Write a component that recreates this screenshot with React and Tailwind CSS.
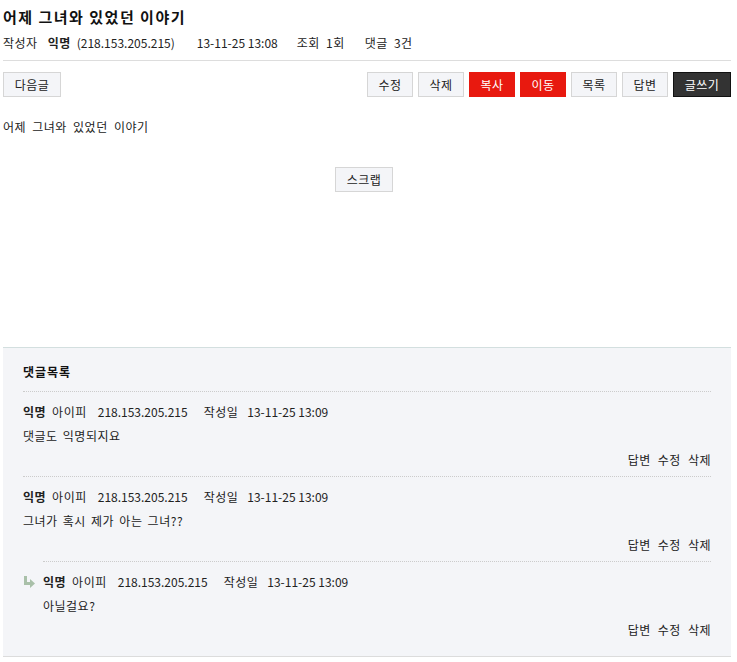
import React from "react";

const font = { fontFamily: '"Noto Sans CJK KR", "Noto Sans", sans-serif' };

const Btn = ({ children, variant = "default", wide = false }) => {
  const styles = {
    default: "bg-[#f4f5f8] border-[#d6d6d6] text-[#222]",
    red: "bg-[#e8190f] border-[#e8190f] text-white",
    dark: "bg-[#333] border-[#111] text-white",
  };
  return (
    <button className={`h-[25px] ${wide ? "w-[58px]" : "w-[46px]"} border text-[12px] leading-none tracking-[0.5px] ${styles[variant]}`}>
      {children}
    </button>
  );
};

const comments = [
  { id: 1, name: "익명", ip: "218.153.205.215", date: "13-11-25 13:09", body: "댓글도 익명되지요", reply: false },
  { id: 2, name: "익명", ip: "218.153.205.215", date: "13-11-25 13:09", body: "그녀가 혹시 제가 아는 그녀??", reply: false },
  { id: 3, name: "익명", ip: "218.153.205.215", date: "13-11-25 13:09", body: "아닐걸요?", reply: true },
];

const ReplyArrow = () => (
  <svg width="12" height="12" viewBox="0 0 12 12" className="shrink-0">
    <path d="M1 0h3v6h3V3l5 4.5L7 12V9H1z" fill="#a9c0a9" />
  </svg>
);

const Comment = ({ c }) => (
  <div className={`pt-[8px] pb-[5px] ${c.reply ? "ml-[20px]" : ""} ${c.id > 1 ? "border-t border-dotted border-[#ccc]" : ""}`}>
    <div className="flex items-center h-[24px] text-[12px] text-[#222]">
      {c.reply && (
        <span className="-ml-[20px] w-[20px] flex items-center">
          <ReplyArrow />
        </span>
      )}
      <b className="font-bold tracking-[0.5px]">{c.name}</b>
      <span className="ml-[6px] tracking-[0.5px]">아이피</span>
      <span className="ml-[11px]">{c.ip}</span>
      <span className="ml-[16px] tracking-[0.5px]">작성일</span>
      <span className="ml-[9px]">{c.date}</span>
    </div>
    <div className="h-[24px] flex items-center text-[12px] text-[#222] tracking-[0.5px] [word-spacing:2px]">{c.body}</div>
    <div className="h-[23px] flex items-center justify-end gap-[7px] text-[12px] text-[#222] tracking-[0.5px]">
      <span>답변</span>
      <span>수정</span>
      <span>삭제</span>
    </div>
  </div>
);

export default function App() {
  return (
    <div style={font} className="w-[737px] bg-white text-[#222] pl-[3px] pr-[6px]">
      {/* title */}
      <h1 className="pt-[7px] h-[30px] text-[15px] font-bold leading-[20px] tracking-[1.5px] text-[#111]">어제 그녀와 있었던 이야기</h1>
      <div className="flex items-center h-[26px] text-[12px]">
        <span className="tracking-[0.5px]">작성자</span>
        <b className="ml-[10px] font-bold tracking-[0.5px]">익명</b>
        <span className="ml-[6px]">(218.153.205.215)</span>
        <span className="ml-[22px]">13-11-25 13:08</span>
        <span className="ml-[19px] tracking-[0.5px] [word-spacing:3px]">조회 1회</span>
        <span className="ml-[20px] tracking-[0.5px] [word-spacing:3px]">댓글 3건</span>
      </div>
      <div className="mt-[4px] border-t border-[#ddd]" />

      {/* buttons */}
      <div className="flex items-center justify-between mt-[11px]">
        <Btn wide>다음글</Btn>
        <div className="flex gap-[5px]">
          <Btn>수정</Btn>
          <Btn>삭제</Btn>
          <Btn variant="red">복사</Btn>
          <Btn variant="red">이동</Btn>
          <Btn>목록</Btn>
          <Btn>답변</Btn>
          <Btn variant="dark" wide>글쓰기</Btn>
        </div>
      </div>

      {/* content */}
      <div className="mt-[20px] h-[20px] flex items-center text-[12px] tracking-[0.5px] [word-spacing:3px]">어제 그녀와 있었던 이야기</div>
      <div className="flex justify-center mt-[30px] pr-[6px]">
        <Btn wide>스크랩</Btn>
      </div>

      {/* comments */}
      <div className="mt-[155px] border-t border-b border-t-[#d3dfdf] border-b-[#dcdcdc] bg-[#f4f5f8] px-[20px] pb-[10px]">
        <div className="h-[43px] flex items-end pb-[10px] text-[12px] font-bold text-[#111] tracking-[1px]">댓글목록</div>
        <div className="border-t border-dotted border-[#ccc]">
          {comments.map((c) => (
            <Comment key={c.id} c={c} />
          ))}
        </div>
      </div>
    </div>
  );
}
